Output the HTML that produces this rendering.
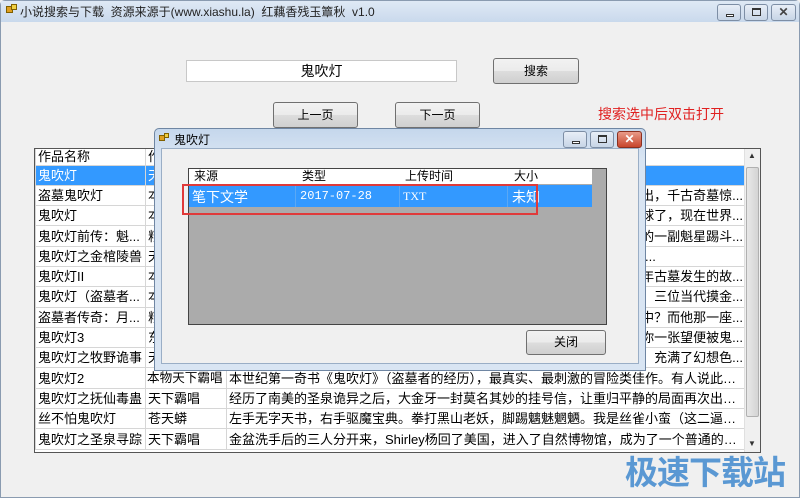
<!DOCTYPE html>
<html><head><meta charset="utf-8"><style>
*{box-sizing:border-box;margin:0;padding:0}
body{width:800px;height:498px;overflow:hidden;background:#f0f0f0;font-family:"Liberation Sans","Noto Sans CJK SC",sans-serif;font-size:12px;color:#000;position:relative}
.abs{position:absolute}
.win{left:0;top:0;width:800px;height:498px;border:1px solid #8a9bb0;border-radius:5px 5px 0 0}
.tb{left:1px;top:1px;width:798px;height:21px;background:linear-gradient(#dfe9f5,#c9d9ec)}
.btn{border:1px solid #707070;border-radius:3px;background:linear-gradient(#f2f2f2 0%,#ebebeb 50%,#dddddd 51%,#cfcfcf 100%);text-align:center;font-size:12px}
.cb{border:1px solid #7d8ea5;border-radius:3px;background:linear-gradient(#e8eef7,#c7d5e6);height:17px}
table{border-collapse:collapse;table-layout:fixed}
td{border:1px solid #d6d6d6;height:20.3px;padding:0 2px;white-space:nowrap;overflow:hidden;text-overflow:ellipsis;font-size:13px;line-height:19px}
td.nw{text-overflow:clip;padding:0 1px;font-size:12.6px}
.r{text-align:right}
.sel td{background:#3399ff;color:#fff}
</style></head><body>
<div class="abs win"></div>
<div class="abs tb"></div>
<div class="abs" style="left:6px;top:6px;width:7px;height:7px;background:#e0a020;border:1px solid #806000"></div>
<div class="abs" style="left:11px;top:4px;width:6px;height:6px;background:#f0d040;border:1px solid #806000"></div>
<div class="abs" style="left:20px;top:3px;font-size:12px;color:#222">小说搜索与下载&nbsp; 资源来源于(www.xiashu.la)&nbsp; 红藕香残玉簟秋&nbsp; v1.0</div>
<div class="abs cb" style="left:717px;top:4px;width:24px"><div class="abs" style="left:8px;top:9px;width:8px;height:3px;border:1px solid #333;background:#fff"></div></div>
<div class="abs cb" style="left:744px;top:4px;width:24px"><div class="abs" style="left:7px;top:3px;width:9px;height:8px;border:1px solid #333;border-top-width:2px"></div></div>
<div class="abs cb" style="left:771px;top:4px;width:25px;text-align:center;font-weight:bold;color:#444;line-height:15px">✕</div>

<div class="abs" style="left:186px;top:60px;width:271px;height:22px;background:#fff;border:1px solid #c8c8c8;text-align:center;font-size:14px;line-height:20px">鬼吹灯</div>
<div class="abs btn" style="left:493px;top:58px;width:86px;height:26px;line-height:24px">搜索</div>
<div class="abs btn" style="left:273px;top:102px;width:85px;height:26px;line-height:24px">上一页</div>
<div class="abs btn" style="left:395px;top:102px;width:85px;height:26px;line-height:24px">下一页</div>
<div class="abs" style="left:598px;top:104px;color:#e02020;font-size:14px">搜索选中后双击打开</div>

<div class="abs" style="left:34px;top:148px;width:727px;height:305px;border:1px solid #555;background:#fff;overflow:hidden">
<table style="width:710px">
<col style="width:110px"><col style="width:81px"><col style="width:519px">
<tr style="background:#fff"><td style="height:16px;line-height:14px;border-top:0">作品名称</td><td style="height:16px;line-height:14px;border-top:0">作者</td><td style="height:16px;border-top:0"></td></tr>
<tr class="sel"><td>鬼吹灯</td><td>天下霸唱</td><td></td></tr>
<tr><td>盗墓鬼吹灯</td><td>本物</td><td class="r">横空而出，千古奇墓惊...</td></tr>
<tr><td>鬼吹灯</td><td>本物</td><td class="r">眼球了，现在世界...</td></tr>
<tr><td>鬼吹灯前传：魁...</td><td>粮食</td><td class="r">下的一副魁星踢斗...</td></tr>
<tr><td>鬼吹灯之金棺陵兽</td><td>天下</td><td style="padding-left:418px">...</td></tr>
<tr><td>鬼吹灯II</td><td>本物</td><td class="r">千年古墓发生的故...</td></tr>
<tr><td>鬼吹灯（盗墓者...</td><td>本物</td><td class="r">，三位当代摸金...</td></tr>
<tr><td>盗墓者传奇：月...</td><td>粮食</td><td class="r">山中？而他那一座...</td></tr>
<tr><td>鬼吹灯3</td><td>东</td><td class="r">穴,你一张望便被鬼...</td></tr>
<tr><td>鬼吹灯之牧野诡事</td><td>天下</td><td class="r">事，充满了幻想色...</td></tr>
<tr><td>鬼吹灯2</td><td class="nw">本物天下霸唱</td><td>本世纪第一奇书《鬼吹灯》（盗墓者的经历），最真实、最刺激的冒险类佳作。有人说此书比咖啡更更更更更</td></tr>
<tr><td>鬼吹灯之抚仙毒蛊</td><td>天下霸唱</td><td>经历了南美的圣泉诡异之后，大金牙一封莫名其妙的挂号信，让重归平静的局面再次出现波澜。胡八一一一</td></tr>
<tr><td>丝不怕鬼吹灯</td><td>苍天蟒</td><td>左手无字天书，右手驱魔宝典。拳打黑山老妖，脚踢魑魅魍魉。我是丝雀小蛮（这二逼青年怎么看着看看看</td></tr>
<tr><td>鬼吹灯之圣泉寻踪</td><td>天下霸唱</td><td>金盆洗手后的三人分开来，Shirley杨回了美国，进入了自然博物馆，成为了一个普通的工作人员。可可可可</td></tr>
</table>
<div class="abs" style="left:709px;top:0;width:17px;height:303px;background:#f0f0f0;border-left:1px solid #e0e0e0"></div>
<div class="abs" style="left:711px;top:18px;width:13px;height:250px;background:linear-gradient(90deg,#e8e8e8,#d4d4d4);border:1px solid #b0b0b0;border-radius:2px"></div>
<div class="abs" style="left:713px;top:2px;font-size:8px;color:#333">▲</div>
<div class="abs" style="left:713px;top:290px;font-size:8px;color:#333">▼</div>
</div>

<div class="abs" style="left:154px;top:128px;width:492px;height:243px;background:linear-gradient(#c5d7ec,#d9e5f3 30px);border:1px solid #6f86a3;border-radius:5px 5px 0 0"></div>
<div class="abs" style="left:161px;top:148px;width:478px;height:216px;background:#f0f0f0;border:1px solid #9aaec6"></div>
<div class="abs" style="left:159px;top:135px;width:6px;height:6px;background:#e0a020;border:1px solid #806000"></div>
<div class="abs" style="left:164px;top:133px;width:5px;height:5px;background:#f0d040;border:1px solid #806000"></div>
<div class="abs" style="left:174px;top:131px;font-size:12px">鬼吹灯</div>
<div class="abs cb" style="left:563px;top:131px;width:24px"><div class="abs" style="left:8px;top:9px;width:8px;height:3px;border:1px solid #333;background:#fff"></div></div>
<div class="abs cb" style="left:590px;top:131px;width:24px"><div class="abs" style="left:7px;top:3px;width:9px;height:8px;border:1px solid #333;border-top-width:2px"></div></div>
<div class="abs" style="left:617px;top:131px;width:25px;height:17px;border:1px solid #8a3020;border-radius:3px;background:linear-gradient(#e89a88,#c8452c);color:#fff;text-align:center;font-weight:bold;line-height:15px">✕</div>

<div class="abs" style="left:188px;top:168px;width:419px;height:157px;background:#ababab;border:1px solid #444"></div>
<div class="abs" style="left:189px;top:169px;width:403px;height:15px;background:#fff"></div>
<div class="abs" style="left:194px;top:169px;font-size:12px;line-height:15px">来源</div>
<div class="abs" style="left:302px;top:169px;font-size:12px;line-height:15px">类型</div>
<div class="abs" style="left:405px;top:169px;font-size:12px;line-height:15px">上传时间</div>
<div class="abs" style="left:514px;top:169px;font-size:12px;line-height:15px">大小</div>
<div class="abs" style="left:189px;top:185px;width:403px;height:22px;background:#3399ff;color:#fff">
<span class="abs" style="left:3px;top:2px;font-size:14px">笔下文学</span>
<span class="abs" style="left:111px;top:4px;font-size:12px;font-family:'Liberation Mono',monospace">2017-07-28</span>
<span class="abs" style="left:214px;top:4px;font-size:12px;font-family:'Liberation Serif',serif">TXT</span>
<span class="abs" style="left:323px;top:2px;font-size:14px">未知</span>
<div class="abs" style="left:106px;top:0;width:1px;height:22px;background:#5aa8f5"></div>
<div class="abs" style="left:210px;top:0;width:1px;height:22px;background:#5aa8f5"></div>
<div class="abs" style="left:318px;top:0;width:1px;height:22px;background:#5aa8f5"></div>
</div>
<div class="abs" style="left:182px;top:184px;width:356px;height:31px;border:2px solid #e03a3a"></div>
<div class="abs btn" style="left:526px;top:330px;width:80px;height:25px;line-height:23px">关闭</div>

<div class="abs" style="left:625px;top:446px;font-size:33px;font-weight:bold;color:#4a8fd0;letter-spacing:-1px;opacity:.9">极速下载站</div>
</body></html>
